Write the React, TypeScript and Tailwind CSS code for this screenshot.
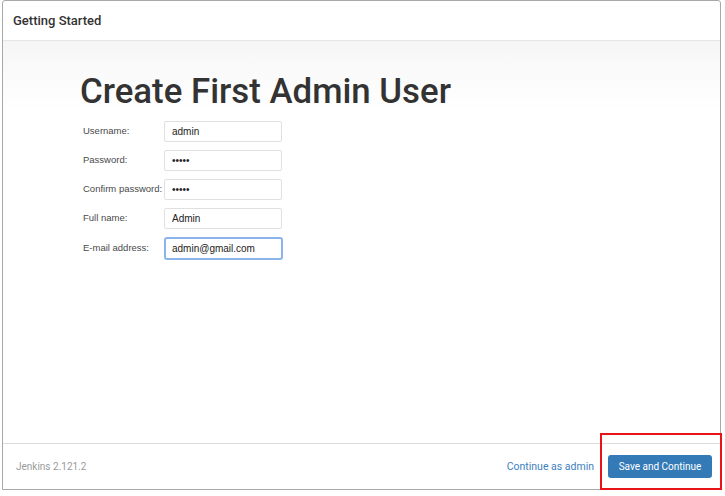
const fields = [
  { label: 'Username:', value: 'admin', type: 'text' },
  { label: 'Password:', value: 'admin', type: 'password' },
  { label: 'Confirm password:', value: 'admin', type: 'password' },
  { label: 'Full name:', value: 'Admin', type: 'text' },
  { label: 'E-mail address:', value: 'admin@gmail.com', type: 'text', focused: true },
];

export default function App() {
  return (
    <div className="relative h-[496px] w-[725px] bg-white" style={{ fontFamily: 'Roboto, sans-serif' }}>
      <div className="ml-[2px] flex h-[490px] w-[719px] flex-col rounded-t-[3px] border border-[#a8a8a8] bg-white">
        <div className="flex h-[40px] items-center border-b border-[#e6e6e6] pl-[10px] text-[13px] font-medium text-[#333]">
          Getting Started
        </div>

        <div className="flex-1 bg-gradient-to-b from-[#f6f6f6] to-white to-[70px] pl-[77px] pt-[30px]">
          <h1 className="text-[34.8px] font-medium leading-[40px] text-[#333]">Create First Admin User</h1>
          <div className="mt-[10px] flex flex-col gap-[8px]" style={{ fontFamily: '"Liberation Sans", Arial, sans-serif' }}>
            {fields.map((f) => (
              <div key={f.label} className="flex items-center">
                <label className="w-[84px] whitespace-nowrap pl-[3px] text-[9.5px] text-[#4a4a4a]">{f.label}</label>
                <input
                  type={f.type}
                  defaultValue={f.value}
                  readOnly
                  className={
                    f.focused
                      ? 'h-[23px] w-[119px] rounded-[3px] border-2 border-[#8ab4ea] bg-white px-[6px] text-[10px] text-[#222] outline-none'
                      : 'h-[21px] w-[118px] rounded-[2px] border border-[#e0e0e0] bg-white px-[7px] text-[10px] text-[#222] outline-none'
                  }
                />
              </div>
            ))}
          </div>
        </div>

        <div className="flex h-[46px] items-center border-t border-[#dcdcdc] pl-[13px] pr-[8px]">
          <span className="text-[10px] text-[#9a9a9a]">Jenkins 2.121.2</span>
          <a className="ml-auto mr-[14px] text-[10.5px] text-[#3d7fbf]">Continue as admin</a>
          <button className="h-[23px] w-[104px] rounded-[3px] bg-[#337ab7] text-[10px] text-white">Save and Continue</button>
        </div>
      </div>

      <div className="absolute left-[600px] top-[433px] h-[57px] w-[122px] border-2 border-[#e8141a]" />
    </div>
  );
}
